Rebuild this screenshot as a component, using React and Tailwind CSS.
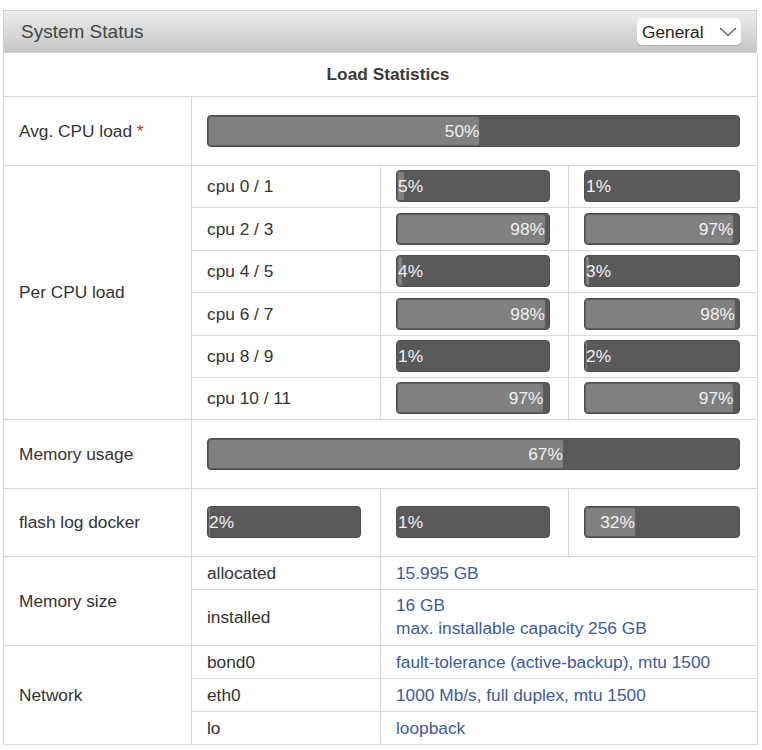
import React from "react";

const cell = "border border-[#d9d9d9] pl-[15px] py-[4px] align-middle";
const blue = "text-[#3d5a9c]";

function Bar({ value, fill = value }) {
  return (
    <div className="h-8 rounded-[4px] bg-[#595959] border border-[#4e4e4e] overflow-hidden">
      <div
        className="h-full rounded-[3px] bg-[#808080] border border-[#5c5c5c] text-right whitespace-nowrap text-[17.3px] leading-[29px] text-[#f2f2f2]"
        style={{ width: fill + "%" }}
      >
        {value}%
      </div>
    </div>
  );
}

const cpuRows = [
  ["cpu 0 / 1", 5, 1, "h-[42px]"],
  ["cpu 2 / 3", 98, 97, "h-[43px]"],
  ["cpu 4 / 5", 4, 3, "h-[42px]"],
  ["cpu 6 / 7", 98, 98, "h-[43px]"],
  ["cpu 8 / 9", 1, 2, "h-[42px]"],
  ["cpu 10 / 11", 97, 97, "h-[42px]"],
];

export default function App() {
  return (
    <div
      className="bg-white min-h-[750px] pt-[10px] pl-[3px] text-[#333] text-[17.3px] leading-[22px]"
      style={{ fontFamily: '"Liberation Sans", Arial, sans-serif' }}
    >
      <div className="w-[754px]">
        {/* panel header */}
        <div className="h-[43px] flex items-center justify-between pl-[17px] pr-[15px] border border-[#cfcfcf] bg-gradient-to-b from-[#ececec] to-[#c7c7c7]">
          <span className="text-[19px] text-[#444]">System Status</span>
          <div className="w-[104px] h-[27px] rounded-[5px] bg-white shadow-[0_1px_1px_rgba(0,0,0,0.15)] flex items-center justify-between pl-[5px] pr-[4px]">
            <span className="text-[17.3px] text-[#222]">General</span>
            <svg width="18" height="10" viewBox="0 0 18 10" fill="none" stroke="#555" strokeWidth="1.2">
              <polyline points="1,1 9,8.5 17,1" />
            </svg>
          </div>
        </div>

        <table className="w-[754px] table-fixed border-collapse">
          <colgroup>
            <col className="w-[188px]" />
            <col className="w-[189px]" />
            <col className="w-[188px]" />
            <col className="w-[189px]" />
          </colgroup>
          <tbody>
            <tr className="h-[43px]">
              <td colSpan={4} className={cell + " pl-0 text-center font-bold text-[#3a3a3a] border-t-0"}>
                Load Statistics
              </td>
            </tr>

            <tr className="h-[69px]">
              <td className={cell}>
                Avg. CPU load <span className="text-[#e0202e]">*</span>
              </td>
              <td colSpan={3} className={cell + " pr-[17px]"}>
                <Bar value={50} fill={51.3} />
              </td>
            </tr>

            {cpuRows.map(([label, a, b, h], i) => (
              <tr key={label} className={h}>
                {i === 0 && (
                  <td rowSpan={6} className={cell}>
                    Per CPU load
                  </td>
                )}
                <td className={cell}>{label}</td>
                <td className={cell + " pr-[18px]"}>
                  <Bar value={a} />
                </td>
                <td className={cell + " pr-[17px]"}>
                  <Bar value={b} />
                </td>
              </tr>
            ))}

            <tr className="h-[69px]">
              <td className={cell}>Memory usage</td>
              <td colSpan={3} className={cell + " pr-[17px]"}>
                <Bar value={67} />
              </td>
            </tr>

            <tr className="h-[68px]">
              <td className={cell}>flash log docker</td>
              <td className={cell + " pr-[19px]"}>
                <Bar value={2} />
              </td>
              <td className={cell + " pr-[18px]"}>
                <Bar value={1} />
              </td>
              <td className={cell + " pr-[17px]"}>
                <Bar value={32} fill={33} />
              </td>
            </tr>

            <tr className="h-[33px]">
              <td rowSpan={2} className={cell}>
                Memory size
              </td>
              <td className={cell}>allocated</td>
              <td colSpan={2} className={cell + " pl-[14px] " + blue}>
                15.995 GB
              </td>
            </tr>
            <tr className="h-[56px]">
              <td className={cell}>installed</td>
              <td colSpan={2} className={cell + " pl-[14px] " + blue + " leading-[23px]"}>
                <div>16 GB</div>
                <div>max. installable capacity 256 GB</div>
              </td>
            </tr>

            <tr className="h-[33px]">
              <td rowSpan={3} className={cell}>
                Network
              </td>
              <td className={cell}>bond0</td>
              <td colSpan={2} className={cell + " pl-[14px] " + blue}>
                fault-tolerance (active-backup), mtu 1500
              </td>
            </tr>
            <tr className="h-[33px]">
              <td className={cell}>eth0</td>
              <td colSpan={2} className={cell + " pl-[14px] " + blue}>
                1000 Mb/s, full duplex, mtu 1500
              </td>
            </tr>
            <tr className="h-[33px]">
              <td className={cell}>lo</td>
              <td colSpan={2} className={cell + " pl-[14px] " + blue}>
                loopback
              </td>
            </tr>
          </tbody>
        </table>
      </div>
    </div>
  );
}
